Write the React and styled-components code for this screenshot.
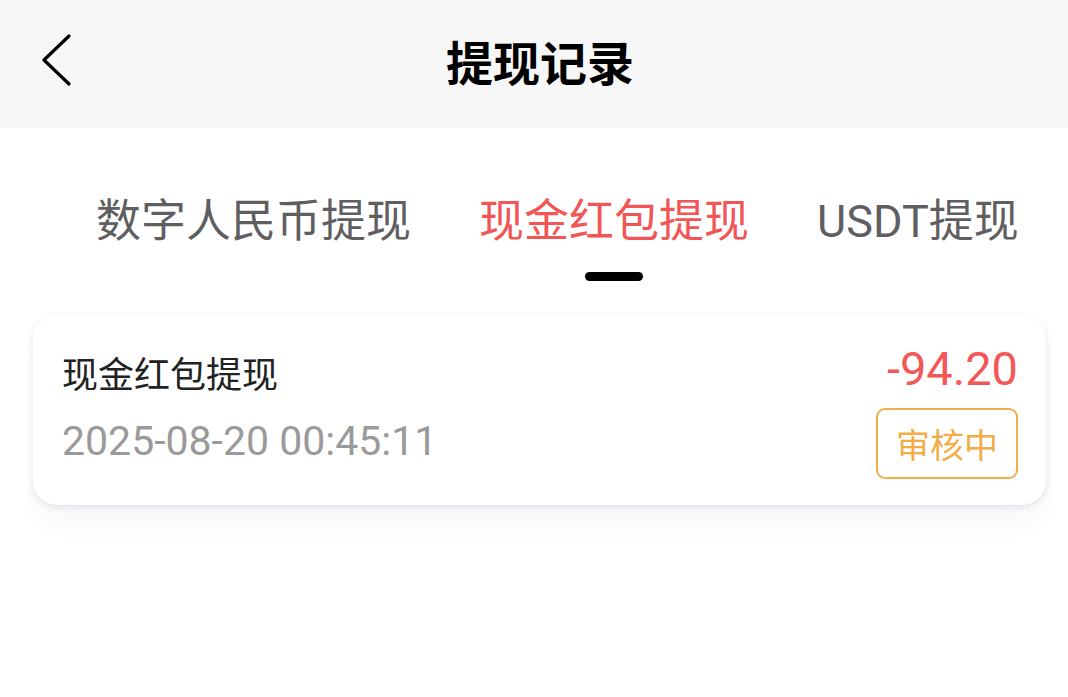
import styled, { createGlobalStyle } from 'styled-components';

const GlobalStyle = createGlobalStyle`
	html, body {
		margin: 0;
		padding: 0;
		background: #fff;
		font-family: Roboto, 'Noto Sans CJK SC', sans-serif;
	}
`;

const Page = styled.div`
	width: 1068px;
	min-height: 697px;
	background: #fff;
`;

const Header = styled.header`
	height: 128px;
	background: #f7f7f7;
	display: grid;
	grid-template-columns: 120px 1fr 120px;
	align-items: center;
`;

const BackButton = styled.button`
	border: none;
	background: none;
	padding: 0 0 8px 40px;
	display: flex;
	align-items: center;
	cursor: pointer;
`;

const Title = styled.h1`
	margin: 0 0 8px 12px;
	text-align: center;
	font-size: 47px;
	font-weight: 700;
	color: #000;
	letter-spacing: 0;
`;

// 탭바 (스크롤된 상태)
const TabViewport = styled.div`
	margin: 0 16px 0 27px;
	overflow: hidden;
	padding-top: 66px;
`;

const TabTrack = styled.div`
	display: flex;
	gap: 68px;
	margin-left: -${(props) => props.scroll}px;
`;

const Tab = styled.div`
	flex: none;
	display: flex;
	flex-direction: column;
	align-items: center;
	font-size: 45px;
	line-height: 56px;
	color: ${(props) => (props.active ? '#f25555' : '#5f5f62')};
	white-space: nowrap;
	cursor: pointer;
`;

const Indicator = styled.span`
	width: 58px;
	height: 9px;
	margin-top: 22px;
	border-radius: 5px;
	background: ${(props) => (props.active ? '#000' : 'transparent')};
`;

const List = styled.div`
	margin: 0 16px 0 27px;
	overflow: hidden;
	padding: 34px 6px 50px;
`;

const Card = styled.div`
	height: 190px;
	box-sizing: border-box;
	padding: 0 28px 0 29px;
	background: #fff;
	border-radius: 24px;
	display: flex;
	justify-content: space-between;
	align-items: center;
	box-shadow: 0 2px 7px rgba(30, 30, 60, 0.1), 0 18px 28px rgba(30, 30, 80, 0.03);
`;

const Info = styled.div`
	display: flex;
	flex-direction: column;
	gap: 20px;
`;

const RecordName = styled.div`
	font-size: 36px;
	line-height: 42px;
	color: #222;
`;

const RecordTime = styled.div`
	font-size: 41px;
	line-height: 48px;
	color: #9a9a9a;
`;

const Side = styled.div`
	display: flex;
	flex-direction: column;
	align-items: flex-end;
	gap: 11px;
`;

const Amount = styled.div`
	font-size: 47px;
	line-height: 56px;
	color: #f25858;
`;

const Status = styled.span`
	box-sizing: border-box;
	width: 142px;
	height: 71px;
	border: 2px solid #f2ac48;
	border-radius: 9px;
	display: flex;
	align-items: center;
	justify-content: center;
	font-size: 34px;
	color: #f2ac48;
`;

const tabs = ['全部提现', '数字人民币提现', '现金红包提现', 'USDT提现'];

function App() {
	let active = 2;
	return (
		<Page>
			<GlobalStyle />
			<Header>
				<BackButton>
					<svg width='32' height='52' viewBox='0 0 32 52' fill='none'>
						<polyline points='29,2 4,26 29,50' stroke='#000' strokeWidth='3.2' strokeLinecap='round' strokeLinejoin='round' />
					</svg>
				</BackButton>
				<Title>提现记录</Title>
				<div />
			</Header>

			<TabViewport>
				<TabTrack scroll={179}>
					{tabs.map((t, idx) => (
						<Tab key={idx} active={idx === active}>
							{t}
							<Indicator active={idx === active} />
						</Tab>
					))}
				</TabTrack>
			</TabViewport>

			<List>
				<Card>
					<Info>
						<RecordName>现金红包提现</RecordName>
						<RecordTime>2025-08-20 00:45:11</RecordTime>
					</Info>
					<Side>
						<Amount>-94.20</Amount>
						<Status>审核中</Status>
					</Side>
				</Card>
			</List>
		</Page>
	);
}

export default App;
